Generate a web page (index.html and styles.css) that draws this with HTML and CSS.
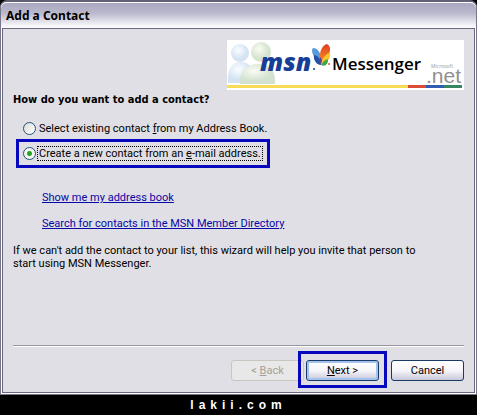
FILE: index.html
```html
<!DOCTYPE html>
<html lang="en">
<head>
    <meta charset="UTF-8">
    <meta name="viewport" content="width=device-width, initial-scale=1.0">
    <title>Add a Contact</title>
    <link rel="stylesheet" href="styles.css">
</head>
<body>
    <form class="window">
        <header class="title-bar">
            <h1>Add a Contact</h1>
        </header>
        <main class="content">
            <svg class="banner" width="237" height="50" viewBox="0 0 237 50" role="img" aria-label="msn Messenger, Microsoft .net">
                <defs>
                    <radialGradient id="blueBuddy" cx="40%" cy="35%">
                        <stop offset="0" stop-color="#fbfdff"/>
                        <stop offset="1" stop-color="#d3e3f2"/>
                    </radialGradient>
                    <radialGradient id="greenBuddy" cx="40%" cy="35%">
                        <stop offset="0" stop-color="#fafcf4"/>
                        <stop offset="1" stop-color="#d3e2cf"/>
                    </radialGradient>
                    <linearGradient id="wing" x2="0" y2="1">
                        <stop offset="0" stop-color="#e23a25"/>
                        <stop offset="1" stop-color="#f6921e"/>
                    </linearGradient>
                </defs>
                <rect width="237" height="50" fill="#fff"/>
                <!-- buddies -->
                <path d="M1 43C0 30 4 22 14 22S27 30 26 43Z" fill="url(#blueBuddy)"/>
                <circle cx="13" cy="13" r="9" fill="url(#blueBuddy)"/>
                <path d="M13 44C12 31 19 24 31 24S49 31 48 44Z" fill="url(#greenBuddy)"/>
                <circle cx="34" cy="12" r="10" fill="url(#greenBuddy)"/>
                <!-- msn wordmark and butterfly -->
                <text class="logo-msn" x="33" y="31">msn</text>
                <circle cx="87" cy="29" r="1" fill="#173e96"/>
                <path d="M94 22C95 14 91 8 86 8C83 11 87 19 94 22Z" fill="#5a9bdc"/>
                <path d="M94 25C94 19 90 15 87 15C86 19 89 25 94 25Z" fill="#2450a8"/>
                <path d="M94 22C91 13 95 5 100 4C106 7 103 17 94 22Z" fill="url(#wing)"/>
                <path d="M94 23C97 15 101 13 103 13C104 18 101 22 94 24Z" fill="#fbc531"/>
                <path d="M94 25C97 20 101 18 101 20C101 24 98 27 94 25Z" fill="#3fa648"/>
                <path d="M93 17L95 20L94 25L92 22Z" fill="#59429a"/>
                <circle cx="102" cy="24" r="1" fill="#d95b49"/>
                <text class="logo-messenger" x="105" y="30">Messenger</text>
                <!-- .net -->
                <text class="logo-microsoft" x="204" y="28">Microsoft</text>
                <text class="logo-net" x="199" y="43">.net</text>
                <path d="M0 45H181V48H0Z" fill="#f8dc55"/>
                <path d="M181 45H199V48H181Z" fill="#dc4c36"/>
                <path d="M199 45H217V48H199Z" fill="#315cb0"/>
                <path d="M217 45H235V48H217Z" fill="#388564"/>
            </svg>

            <fieldset class="options">
                <legend>How do you want to add a contact?</legend>
                <div class="option">
                    <input type="radio" name="source" id="existing">
                    <label for="existing">Select existing contact <u>f</u>rom my Address Book.</label>
                </div>
                <div class="option option-marked">
                    <input type="radio" name="source" id="create" checked>
                    <label for="create">Create a new contact from an <u>e</u>-mail address.</label>
                </div>
            </fieldset>

            <nav class="links">
                <a href="#address-book">Show me my address book</a>
                <a href="#directory">Search for contacts in the MSN Member Directory</a>
            </nav>

            <p class="note">If we can't add the contact to your list, this wizard will help you invite that person to start using MSN Messenger.</p>

            <footer class="actions">
                <button type="button" disabled>&lt; <u>B</u>ack</button>
                <button type="submit" class="next"><u>N</u>ext &gt;</button>
                <button type="button" class="cancel">Cancel</button>
            </footer>
        </main>
    </form>
    <div class="watermark">lakii.com</div>
</body>
</html>
```
FILE: styles.css
```css
* {
    box-sizing: border-box;
}

body {
    display: flex;
    flex-direction: column;
    min-height: 100vh;
    margin: 0;
    background: #000;
    color: #000;
    font-family: Tahoma, Roboto, sans-serif;
    font-size: 11px;
    line-height: 13px;
}

.window {
    display: flex;
    flex: 1;
    flex-direction: column;
    border: 1px solid #77758c;
    border-top: 2px solid #63617a;
    border-radius: 7px 7px 0 0;
    background: #fff;
}

.title-bar {
    padding: 6px 5px 5px;
    border-top: 1px solid #fff;
    border-radius: 6px 6px 0 0;
    background: linear-gradient(#a9a8c1, #b9b8cc 40%, #f5f5f9 90%, #fff);
}

.title-bar h1 {
    margin: 0;
    font-family: "Trebuchet MS", "Noto Sans", sans-serif;
    font-size: 12px;
    line-height: 14px;
}

.content {
    display: flex;
    flex: 1;
    flex-direction: column;
    margin: 0 1px 1px;
    padding: 11px 10px;
    border: 1px solid #6b697f;
    background: #e0dfe5;
}

.banner {
    align-self: flex-end;
    font-family: "Open Sans", sans-serif;
}

.logo-msn {
    fill: #173e96;
    font-size: 25px;
    font-style: italic;
    font-weight: 800;
}

.logo-messenger {
    font-size: 17px;
    font-weight: 600;
}

.logo-microsoft {
    fill: #999;
    font-size: 5px;
}

.logo-net {
    fill: #909090;
    font-family: "Liberation Sans", sans-serif;
    font-size: 21px;
}

.options {
    margin: 3px 0 0;
    padding: 0;
    border: 0;
}

.options legend {
    padding: 0;
    font-family: Tahoma, "DejaVu Sans Condensed", "DejaVu Sans", sans-serif;
    font-stretch: condensed;
    font-weight: bold;
}

.option {
    display: flex;
    align-items: center;
    gap: 1px;
    width: fit-content;
    margin: 15px 0 0 10px;
}

.option input {
    appearance: none;
    width: 13px;
    height: 13px;
    margin: 0;
    border: 1px solid #24527b;
    border-radius: 50%;
    background: linear-gradient(135deg, #dcdcd8, #fff);
}

.option input:checked {
    background: radial-gradient(#26a526 0 2px, #f4f4f2 3px);
}

.option label {
    padding: 0 1px;
    border: 1px dotted transparent;
}

.option-marked {
    margin: 3px 0 0 3px;
    padding: 4px;
    border: 3px solid #0707bd;
}

.option-marked label {
    border-color: #000;
}

.links {
    display: flex;
    flex-direction: column;
    align-items: flex-start;
    gap: 13px;
    margin: 23px 0 0 29px;
}

.links a {
    color: #0707a5;
}

.note {
    margin: 14px 36px 14px 0;
}

.actions {
    display: flex;
    justify-content: flex-end;
    margin-top: auto;
    padding-top: 14px;
    border-top: 1px solid #96949f;
    box-shadow: inset 0 1px #fff;
}

.actions button {
    width: 73px;
    height: 21px;
    padding: 0;
    border: 1px solid #173a67;
    border-radius: 3px;
    background: linear-gradient(#fff, #f6f6fa 50%, #c9c7d9);
    color: #000;
    font: inherit;
}

.actions button:disabled {
    border-color: #c7c6bf;
    background: #e9e8e9;
    color: #a2a198;
}

.actions .next {
    position: relative;
    margin-left: 2px;
    box-shadow: inset 0 0 0 2px #a5c1ed;
}

/* highlight frame lies over the neighbouring button */
.next::after {
    position: absolute;
    inset: -10px -9px -8px;
    border: 3px solid #0707bd;
    content: "";
}

.actions .cancel {
    margin-left: 12px;
}

.watermark {
    padding: 4px 0 3px;
    color: #fff;
    font-family: "Liberation Sans", Arial, sans-serif;
    font-size: 12px;
    font-weight: bold;
    letter-spacing: 5px;
    text-align: center;
}
```
